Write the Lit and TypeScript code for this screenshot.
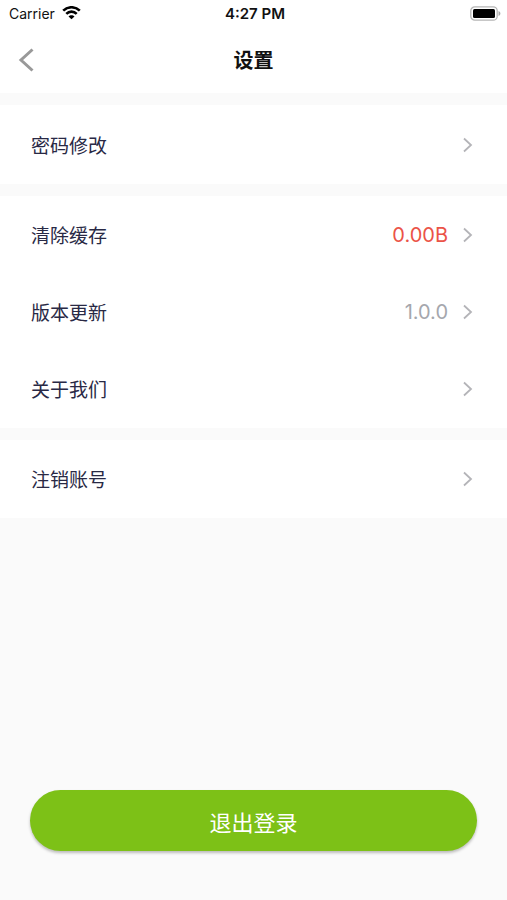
import { LitElement, html, css, svg, nothing } from "lit";
import { customElement, property } from "lit/decorators.js";

interface Row {
  label: string;
  value?: string;
  tone?: "alert" | "muted";
}

const groups: Row[][] = [
  [{ label: "密码修改" }],
  [
    { label: "清除缓存", value: "0.00B", tone: "alert" },
    { label: "版本更新", value: "1.0.0", tone: "muted" },
    { label: "关于我们" },
  ],
  [{ label: "注销账号" }],
];

const wifi = svg`
  <g fill="none" stroke="#000" stroke-width="2.6">
    <path d="M1.2 4.700C5.8 .1 13.200 .1 17.800 4.700"/>
    <path d="M4.300 7.800C7.200 4.900 11.800 4.900 14.700 7.800"/>
  </g>
  <path d="M9.500 13.300L6.500 10.400C8 8.800 11 8.800 12.500 10.400Z"/>`;

@customElement("status-bar")
class StatusBar extends LitElement {
  static styles = css`
    :host {
      display: grid;
      grid-template-columns: 1fr auto 1fr;
      align-items: center;
      height: 27px;
      padding: 0 6px 0 9px;
      font: 14px/20px Inter, "Liberation Sans", sans-serif;
      color: #111;
    }
    .carrier {
      display: flex;
      align-items: center;
      gap: 7px;
    }
    .time {
      font-size: 15px;
      font-weight: 600;
    }
    .battery {
      justify-self: end;
    }
    svg {
      display: block;
    }
  `;
  render() {
    return html`
      <span class="carrier">Carrier
        <svg width="19" height="15" viewBox="0 0 19 15" aria-hidden="true">${wifi}</svg>
      </span>
      <span class="time">4:27 PM</span>
      <svg class="battery" width="31" height="15" viewBox="0 0 31 15" role="img" aria-label="Battery">
        <rect x="0.800" y="0.800" width="26.400" height="13.400" rx="4" fill="#fff" stroke="#b5b5b5" stroke-width="1.300"/>
        <rect x="3" y="3" width="22" height="9" rx="1.500"/>
        <path d="M28.500 5V10C31 9 31 6 28.500 5Z" fill="#a8a8a8"/>
      </svg>
    `;
  }
}

@customElement("settings-row")
class SettingsRow extends LitElement {
  @property() label = "";
  @property() value?: string;
  @property() tone = "muted";

  static styles = css`
    :host {
      display: block;
    }
    .row {
      display: flex;
      align-items: center;
      width: 100%;
      height: 77px;
      padding: 0 34px 0 31px;
      border: 0;
      background: none;
      color: #292945;
      font: 19px/28px "Noto Sans CJK SC", sans-serif;
      text-align: left;
      cursor: pointer;
    }
    .label {
      flex: 1;
    }
    .value {
      margin-right: 15px;
      font-family: Inter, sans-serif;
      font-size: 20px;
    }
    .alert {
      color: #eb5347;
    }
    .muted {
      color: #a5a7ad;
    }
  `;
  render() {
    return html`
      <button class="row" type="button">
        <span class="label">${this.label}</span>
        ${this.value ? html`<span class="value ${this.tone}">${this.value}</span>` : nothing}
        <svg width="10" height="16" viewBox="0 0 10 16" fill="none" stroke="#b4b4b8" stroke-width="1.800" aria-hidden="true">
          <path d="M1 1.500L8 8L1 14.500"/>
        </svg>
      </button>
    `;
  }
}

@customElement("app-root")
class AppRoot extends LitElement {
  static styles = css`
    :host {
      display: flex;
      flex-direction: column;
      min-height: 100vh;
      background: #fafafa;
      font-family: "Noto Sans CJK SC", sans-serif;
    }
    header {
      background: #fff;
    }
    .nav {
      display: grid;
      grid-template-columns: 1fr auto 1fr;
      align-items: center;
      height: 66px;
      padding: 0 18px;
    }
    .back {
      justify-self: start;
      display: flex;
      padding: 0;
      border: 0;
      background: none;
      cursor: pointer;
    }
    h1 {
      margin: 0;
      font-size: 20px;
      line-height: 28px;
      font-weight: 700;
      color: #111;
    }
    main {
      flex: 1;
      display: flex;
      flex-direction: column;
      gap: 12px;
      padding-top: 12px;
    }
    .group {
      background: #fff;
      padding: 1px 0;
    }
    .group + .group {
      padding-top: 0;
    }
    .logout {
      height: 61px;
      margin: auto 30px 49px;
      border: 0;
      border-radius: 31px;
      background: #7dc117;
      box-shadow: 0 2px 3px rgba(0, 0, 0, 0.25);
      color: #fff;
      font: 22px/32px "Noto Sans CJK SC", sans-serif;
      cursor: pointer;
    }
  `;
  render() {
    return html`
      <header>
        <status-bar></status-bar>
        <div class="nav">
          <button class="back" type="button" aria-label="返回">
            <svg width="16" height="24" viewBox="0 0 16 24" fill="none" stroke="#999" stroke-width="3" aria-hidden="true">
              <path d="M14.500 1.500L3 12L14.500 22.500"/>
            </svg>
          </button>
          <h1>设置</h1>
        </div>
      </header>
      <main>
        ${groups.map(
          (rows) => html`<section class="group">
            ${rows.map(
              (r) => html`<settings-row .label=${r.label} .value=${r.value} .tone=${r.tone ?? "muted"}></settings-row>`
            )}
          </section>`
        )}
        <button class="logout" type="button">退出登录</button>
      </main>
    `;
  }
}
